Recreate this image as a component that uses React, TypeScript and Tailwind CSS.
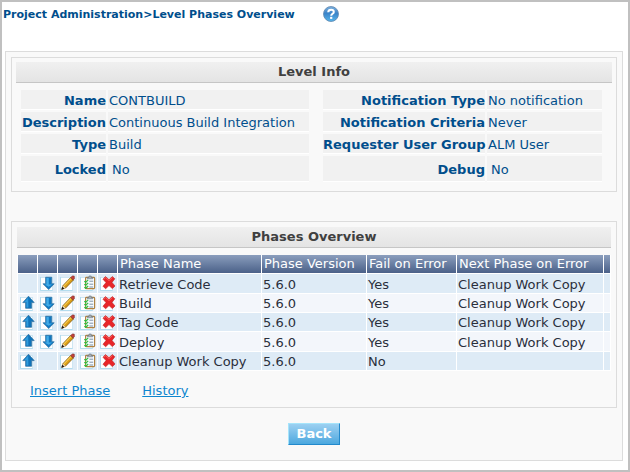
import type { ReactNode } from "react";

type Field = { label: string; value: string; tall?: boolean };

type Phase = {
  name: string;
  version: string;
  fail: string;
  next: string;
};

const levelFields: Field[] = [
  { label: "Name", value: "CONTBUILD" },
  { label: "Description", value: "Continuous Build Integration" },
  { label: "Type", value: "Build" },
  { label: "Locked", value: "No", tall: true },
];

const notificationFields: Field[] = [
  { label: "Notification Type", value: "No notification" },
  { label: "Notification Criteria", value: "Never" },
  { label: "Requester User Group", value: "ALM User" },
  { label: "Debug", value: "No", tall: true },
];

const phases: Phase[] = [
  { name: "Retrieve Code", version: "5.6.0", fail: "Yes", next: "Cleanup Work Copy" },
  { name: "Build", version: "5.6.0", fail: "Yes", next: "Cleanup Work Copy" },
  { name: "Tag Code", version: "5.6.0", fail: "Yes", next: "Cleanup Work Copy" },
  { name: "Deploy", version: "5.6.0", fail: "Yes", next: "Cleanup Work Copy" },
  { name: "Cleanup Work Copy", version: "5.6.0", fail: "No", next: "" },
];

// White sheet that sits behind every row action glyph.
function Sheet({ children }: { children: ReactNode }) {
  return (
    <svg viewBox="0 0 16 16" className="block size-4" aria-hidden="true">
      <rect x="0.5" y="2.5" width="12" height="13" fill="#fff" stroke="#cfe6f2" />
      <path d="M0.5 2v13.5h12" fill="none" stroke="#b3dcee" />
      {children}
    </svg>
  );
}

function UpIcon() {
  return (
    <Sheet>
      <path d="M8.5 1.2 14.2 7.6h-2.6v5.7H5.6V7.6H2.8z" fill="#0f74ba" stroke="#2c6f9f" strokeWidth="0.7" />
      <path d="M8.2 2.6 4.2 7H6.4v5.4H8.4z" fill="#2f9bdc" />
    </Sheet>
  );
}

function DownIcon() {
  return (
    <Sheet>
      <path d="M8.7 14.6 14.2 8.8h-2.5V2.2H5.6v6.6H3z" fill="#0f78c2" stroke="#2c6f9f" strokeWidth="0.7" />
      <path d="M6.4 3h2.4v6.4h3.6l-3.8 2.4-4-2.4h1.8z" fill="#41abe6" />
    </Sheet>
  );
}

function EditIcon() {
  return (
    <Sheet>
      <path d="M2 14.2 2.8 10.8 10.6 2.6 13.4 5 5.6 13z" fill="#dc9f16" stroke="#7a5512" strokeWidth="0.8" />
      <path d="m4 10.8 7.4-7.6" stroke="#f6cd55" strokeWidth="1.1" />
      <path d="m2.9 10.6 3 2.6-1.4.6-2.2-1.6z" fill="#f0dcb4" />
      <path d="M10.6 2.6 12.4 1h1.8l.2 2.4-1.2 1.6z" fill="#c2413c" stroke="#7d2f2b" strokeWidth="0.6" />
      <path d="m1.2 15 1-3.2 2.2 1.8z" fill="#1f1b18" />
    </Sheet>
  );
}

function ChecklistIcon() {
  return (
    <Sheet>
      <rect x="5.6" y="2.4" width="9" height="11.2" rx="0.8" fill="#f7fbff" stroke="#b08342" strokeWidth="1.2" />
      <path d="M7.4 3.8V2.4h1.6V1h2.2v1.4h1.6v1.4z" fill="#a9b1b8" stroke="#66727d" strokeWidth="0.6" />
      <path d="M9.4 6.2h3.8M9.4 9.2h3.8M9.4 12h3.8" stroke="#7f93a5" />
      <path d="m4.4 6.2 1.2 1.3 2.6-2.6M4.4 9.2l1.2 1.3 2.6-2.6M4.4 12.2l1.2 1.2 2.6-2.4" fill="none" stroke="#2fbf3f" strokeWidth="1.2" />
    </Sheet>
  );
}

function DeleteIcon() {
  return (
    <Sheet>
      <path
        d="M3 4.2 5.4 1.6 9 4.6 12.4 1.6 14.8 3.8 12 7.4 15 11 12.4 13.6 9 10.6 5.6 13.8 3 11.2 6 7.6z"
        fill="#e8262a"
        stroke="#c0201f"
        strokeWidth="0.6"
      />
      <path d="M4 4.1 5.5 2.6 9 5.6l3.4-3" fill="none" stroke="#f7706a" strokeWidth="0.8" />
    </Sheet>
  );
}

function HelpIcon() {
  return (
    <svg viewBox="0 0 16 16" className="block size-4" aria-hidden="true">
      <defs>
        <linearGradient id="helpFill" x1="0" y1="0" x2="0" y2="1">
          <stop offset="0" stopColor="#7fb2df" />
          <stop offset="0.45" stopColor="#3a83c8" />
          <stop offset="1" stopColor="#55b5ec" />
        </linearGradient>
      </defs>
      <circle cx="8" cy="8" r="7.5" fill="url(#helpFill)" stroke="#5f86ad" strokeWidth="0.8" />
      <path
        d="M5.2 6.2C5.3 4.5 6.4 3.7 8.1 3.7c1.6 0 2.7.8 2.7 2.2 0 1.9-2.6 1.9-2.6 3.9"
        fill="none"
        stroke="#fff"
        strokeWidth="2"
      />
      <rect x="7.1" y="10.8" width="2.2" height="2.1" fill="#fff" />
    </svg>
  );
}

function PanelTitle({ children }: { children: ReactNode }) {
  return (
    <h2 className="h-[21px] border-b border-[#c6c6c6] bg-linear-to-b from-[#f0f0f0] to-[#e4e4e4] text-center text-[13px] leading-5 font-bold text-[#404040]">
      {children}
    </h2>
  );
}

function FieldTable({ fields, labelWidth }: { fields: Field[]; labelWidth: string }) {
  return (
    <table className="w-full table-fixed border-collapse">
      <colgroup>
        <col className={labelWidth} />
        <col />
      </colgroup>
      <tbody className="text-[#004e8c]">
        {fields.map((f) => (
          <tr key={f.label}>
            <th scope="row" className="p-0 pr-0.5 pb-0.5 text-right font-bold whitespace-nowrap">
              <div className={`border-b border-white bg-[#f1f1f1] ${f.tall ? "h-[26px] leading-7" : "h-5 leading-[22px]"}`}>
                {f.label}
              </div>
            </th>
            <td className="p-0 pb-0.5 whitespace-nowrap">
              <div className={`border-b border-white bg-[#f1f1f1] ${f.tall ? "h-[26px] pl-1 leading-7" : "h-5 pl-px leading-[22px]"}`}>
                {f.value}
              </div>
            </td>
          </tr>
        ))}
      </tbody>
    </table>
  );
}

function Action({ label, children }: { label: string; children: ReactNode }) {
  return (
    <button type="button" aria-label={label} className="mt-px ml-0.5 block cursor-pointer">
      {children}
    </button>
  );
}

const headCell = "border-r border-b border-white p-0 pl-0.5 text-left font-normal whitespace-nowrap";
const iconCell = "border-r border-b border-white p-0 align-top";
const textCell = "border-r border-b border-white p-0 pt-0.5 pl-px leading-4 whitespace-nowrap";

export default function App() {
  return (
    <div className="min-h-screen border-2 border-[#c0c0c0] bg-white font-['DejaVu_Sans',Verdana,sans-serif] text-[13px]">
      <header className="flex h-[49px] items-start gap-7 pt-1 pl-px">
        <h1 className="text-[11px] leading-[18px] font-bold whitespace-nowrap text-[#004e8c]">
          Project Administration&gt;Level Phases Overview
        </h1>
        <button type="button" aria-label="Help" className="cursor-pointer">
          <HelpIcon />
        </button>
      </header>

      <main className="mr-[5px] mb-[9px] ml-[3px] border border-[#dcdcdc] bg-[#f9f9f9] px-[5px] pt-[5px] pb-[15px]">
        <section className="border border-[#dcdcdc] px-1 pt-1 pb-[7px]">
          <PanelTitle>Level Info</PanelTitle>
          <div className="flex gap-[14px] pt-[7px] pr-[10px] pl-[5px]">
            <div className="flex-[288]">
              <FieldTable fields={levelFields} labelWidth="w-[87px]" />
            </div>
            <div className="flex-[279]">
              <FieldTable fields={notificationFields} labelWidth="w-[164px]" />
            </div>
          </div>
        </section>

        <section className="mt-[29px] border border-[#dcdcdc] px-[5px] pt-[5px] pb-[7px]">
          <PanelTitle>Phases Overview</PanelTitle>
          <table className="mt-[7px] w-full table-fixed border-separate border-spacing-0 border-l border-white">
            <colgroup>
              <col className="w-5" />
              <col className="w-5" />
              <col className="w-5" />
              <col className="w-5" />
              <col className="w-5" />
              <col className="w-36" />
              <col className="w-[105px]" />
              <col className="w-[90px]" />
              <col />
              <col className="w-[7px]" />
            </colgroup>
            <thead>
              <tr className="h-[19px] bg-linear-to-b from-[#8b9ebd] to-[#485e86] leading-[18px] text-white">
                <td className={headCell} />
                <td className={headCell} />
                <td className={headCell} />
                <td className={headCell} />
                <td className={headCell} />
                <th scope="col" className={headCell}>Phase Name</th>
                <th scope="col" className={headCell}>Phase Version</th>
                <th scope="col" className={headCell}>Fail on Error</th>
                <th scope="col" className={headCell}>Next Phase on Error</th>
                <td className={headCell} />
              </tr>
            </thead>
            <tbody className="text-[#2a2f3c]">
              {phases.map((p, i) => (
                <tr key={p.name} className={`odd:bg-[#deebf6] even:bg-[#f3f6fb] ${i % 3 === 0 ? "h-5" : "h-[19px]"}`}>
                  <td className={iconCell}>
                    {i > 0 && <Action label={`Move ${p.name} up`}><UpIcon /></Action>}
                  </td>
                  <td className={iconCell}>
                    {i < phases.length - 1 && <Action label={`Move ${p.name} down`}><DownIcon /></Action>}
                  </td>
                  <td className={iconCell}>
                    <Action label={`Edit ${p.name}`}><EditIcon /></Action>
                  </td>
                  <td className={iconCell}>
                    <Action label={`Tasks of ${p.name}`}><ChecklistIcon /></Action>
                  </td>
                  <td className={iconCell}>
                    <Action label={`Delete ${p.name}`}><DeleteIcon /></Action>
                  </td>
                  <td className={textCell}>{p.name}</td>
                  <td className={textCell}>{p.version}</td>
                  <td className={textCell}>{p.fail}</td>
                  <td className={textCell}>{p.next}</td>
                  <td className={textCell} />
                </tr>
              ))}
            </tbody>
          </table>
          <nav className="mt-[11px] flex gap-8 pl-[13px] leading-[18px] text-[#0e86cf]">
            <a href="#insert-phase" className="underline">Insert Phase</a>
            <a href="#history" className="underline">History</a>
          </nav>
        </section>

        <div className="mt-[15px] flex justify-center">
          <button
            type="button"
            className="h-[22px] w-[52px] cursor-pointer border border-t-[#a5e4fb] border-r-[#2289cc] border-b-[#2289cc] border-l-[#a5e4fb] bg-linear-to-b from-[#9bd0f1] to-[#4ba8df] text-[13px] leading-5 font-bold text-white"
          >
            Back
          </button>
        </div>
      </main>
    </div>
  );
}
